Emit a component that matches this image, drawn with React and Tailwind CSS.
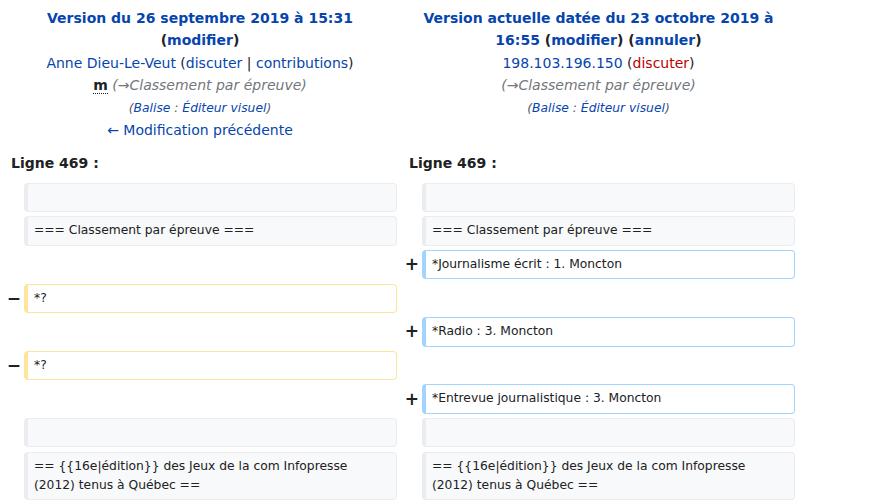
import React from 'react';

const link = 'text-[#0645ad]';

const rows = [
  { left: { type: 'ctx', text: '' }, right: { type: 'ctx', text: '' } },
  { left: { type: 'ctx', text: '=== Classement par épreuve ===' }, right: { type: 'ctx', text: '=== Classement par épreuve ===' } },
  { left: null, right: { type: 'add', text: '*Journalisme écrit : 1. Moncton' } },
  { left: { type: 'del', text: '*?' }, right: null },
  { left: null, right: { type: 'add', text: '*Radio : 3. Moncton' } },
  { left: { type: 'del', text: '*?' }, right: null },
  { left: null, right: { type: 'add', text: '*Entrevue journalistique : 3. Moncton' } },
  { left: { type: 'ctx', text: '' }, right: { type: 'ctx', text: '' } },
  {
    left: { type: 'ctx', text: '== {{16e|édition}} des Jeux de la com Infopresse (2012) tenus à Québec ==' },
    right: { type: 'ctx', text: '== {{16e|édition}} des Jeux de la com Infopresse (2012) tenus à Québec ==' },
  },
];

const boxStyles = {
  ctx: 'bg-[#f8f9fa] border-[#eaecf0]',
  add: 'bg-white border-[#a3d3ff]',
  del: 'bg-white border-[#ffe49c]',
};

function Marker({ cell, width }) {
  let sign = '';
  if (cell && cell.type === 'add') sign = '+';
  if (cell && cell.type === 'del') sign = '−';
  return (
    <div className={`${width} shrink-0 flex items-center justify-end pr-[3px] font-bold text-[17px] leading-none text-[#202122]`}>
      {sign}
    </div>
  );
}

function Cell({ cell }) {
  if (!cell) return <div className="w-[373px] shrink-0" />;
  return (
    <div
      className={`w-[373px] shrink-0 min-h-[29.4px] rounded-[4px] border border-l-4 pl-[6px] pr-[8px] py-[4px] text-[12.3px] leading-[19.4px] text-[#202122] ${boxStyles[cell.type]}`}
    >
      {cell.text}
    </div>
  );
}

export default function App() {
  return (
    <div className="w-[874px] h-[503px] overflow-hidden bg-white font-['DejaVu_Sans',sans-serif] text-[#202122]">
      <div className="w-[795px]">
        {/* version headers */}
        <div className="flex pt-[7px] text-[14px] leading-[22.4px]">
          <div className="w-[400px] shrink-0 text-center px-[8px]">
            <div className="font-bold">
              <span className={link}>Version du 26 septembre 2019 à 15:31</span> (<span className={link}>modifier</span>)
            </div>
            <div>
              <span className={link}>Anne Dieu-Le-Veut</span> (<span className={link}>discuter</span> | <span className={link}>contributions</span>)
            </div>
            <div>
              <abbr className="font-bold no-underline border-b border-dotted border-[#202122]">m</abbr>{' '}
              <span className="italic text-[#72777d]">(→Classement par épreuve)</span>
            </div>
            <div className="italic text-[12.3px] text-[#54595d]">
              (<span className={link}>Balise</span> : <span className={link}>Éditeur visuel</span>)
            </div>
            <div>
              <span className={link}>← Modification précédente</span>
            </div>
          </div>
          <div className="w-[397px] shrink-0 text-center px-[8px]">
            <div className="font-bold">
              <span className={link}>Version actuelle datée du 23 octobre 2019 à</span>{' '}
              <span className={link}>16:55</span> (<span className={link}>modifier</span>) (<span className={link}>annuler</span>)
            </div>
            <div>
              <span className={link}>198.103.196.150</span> (<span className="text-[#ba0000]">discuter</span>)
            </div>
            <div className="italic text-[#72777d]">(→Classement par épreuve)</div>
            <div className="italic text-[12.3px] text-[#54595d]">
              (<span className={link}>Balise</span> : <span className={link}>Éditeur visuel</span>)
            </div>
          </div>
        </div>

        {/* line numbers */}
        <div className="flex mt-[11px] text-[14px] leading-[22.4px] font-bold">
          <div className="w-[400px] shrink-0 pl-[11px]">Ligne 469 :</div>
          <div className="w-[395px] shrink-0 pl-[9px]">Ligne 469 :</div>
        </div>

        {/* diff rows */}
        <div className="flex flex-col gap-[4.2px] mt-[8px]">
          {rows.map((row, i) => (
            <div key={i} className="flex">
              <Marker cell={row.left} width="w-[24px]" />
              <Cell cell={row.left} />
              <Marker cell={row.right} width="w-[25px]" />
              <Cell cell={row.right} />
            </div>
          ))}
        </div>
      </div>
    </div>
  );
}
